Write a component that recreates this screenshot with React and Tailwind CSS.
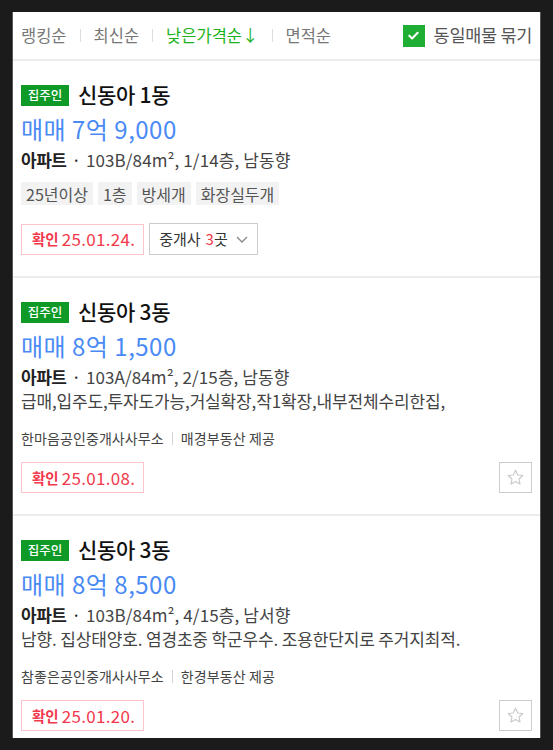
import React from 'react';

const FONT = { fontFamily: '"Noto Sans CJK KR", "Noto Sans", sans-serif' };

const listings = [
  {
    title: '신동아 1동',
    price: '매매 7억 9,000',
    spec: '103B/84m², 1/14층, 남동향',
    tags: ['25년이상', '1층', '방세개', '화장실두개'],
    confirm: '25.01.24.',
    brokers: 3,
  },
  {
    title: '신동아 3동',
    price: '매매 8억 1,500',
    spec: '103A/84m², 2/15층, 남동향',
    desc: '급매,입주도,투자도가능,거실확장,작1확장,내부전체수리한집,',
    agency: '한마음공인중개사사무소',
    source: '매경부동산 제공',
    confirm: '25.01.08.',
  },
  {
    title: '신동아 3동',
    price: '매매 8억 8,500',
    spec: '103B/84m², 4/15층, 남서향',
    desc: '남향. 집상태양호. 염경초중 학군우수. 조용한단지로 주거지최적.',
    agency: '참좋은공인중개사사무소',
    source: '한경부동산 제공',
    confirm: '25.01.20.',
  },
];

function SortBar() {
  const items = [
    { label: '랭킹순' },
    { label: '최신순' },
    { label: '낮은가격순↓', active: true },
    { label: '면적순' },
  ];
  return (
    <div className="flex items-center justify-between h-[49px] px-2 border-b-2 border-[#ececec]">
      <div className="flex items-center text-[16.5px]">
        {items.map((item, i) => (
          <React.Fragment key={item.label}>
            {i > 0 && <span className="mx-[13px] w-px h-[13px] bg-[#dddddd]" />}
            <span className={item.active ? 'text-[#1cb31c]' : 'text-[#777777]'}>{item.label}</span>
          </React.Fragment>
        ))}
      </div>
      <div className="flex items-center gap-[9px]">
        <span className="flex items-center justify-center w-[22px] h-[22px] bg-[#1fae34]">
          <svg width="13" height="13" viewBox="0 0 14 14" fill="none">
            <path d="M2.5 7.2l3 3 6-6.2" stroke="white" strokeWidth="2.2" strokeLinecap="round" strokeLinejoin="round" />
          </svg>
        </span>
        <span className="text-[17.5px] text-[#555555] tracking-[-0.3px]">동일매물 묶기</span>
      </div>
    </div>
  );
}

function Confirm({ date }) {
  return (
    <div className="flex items-center h-[31px] pl-[10px] pr-[8px] border border-[#ffc4cb] text-[#f2384c]">
      <span className="text-[14.5px] font-bold mr-[3px]">확인</span>
      <span className="text-[17px] tracking-[0.3px]">{date}</span>
    </div>
  );
}

function Listing({ item, last }) {
  return (
    <div className={last ? 'px-2 pt-[21px] pb-[5px]' : 'px-2 pt-[21px] pb-[21px] border-b-2 border-[#ececec]'}>
      <div className="flex items-center h-[26px]">
        <span className="flex items-center justify-center w-[48px] h-[21px] bg-[#0f9a27] text-white text-[12.5px] font-medium">
          집주인
        </span>
        <span className="ml-[9px] text-[21px] font-medium text-[#111111] tracking-[-0.3px]">{item.title}</span>
      </div>
      <div className="mt-[6px] h-[30px] flex items-center text-[24px] text-[#4a8af4] tracking-[0.5px]">
        {item.price}
      </div>
      <div className="mt-[4px] h-[24px] flex items-center text-[17px] text-[#444444]">
        <span className="font-bold text-[#222222] tracking-[-0.5px]">아파트</span>
        <span className="mx-[5px] text-[#222222]">·</span>
        <span className="tracking-[0.1px]">{item.spec}</span>
      </div>
      {item.tags && (
        <div className="mt-[10px] flex gap-[5px]">
          {item.tags.map((t) => (
            <span key={t} className="h-[23px] px-[5px] flex items-center bg-[#f2f2f2] text-[16px] text-[#555555]">
              {t}
            </span>
          ))}
        </div>
      )}
      {item.desc && (
        <div className="h-[24px] flex items-center text-[17px] text-[#444444] tracking-[-0.15px]">{item.desc}</div>
      )}
      {item.agency && (
        <div className="mt-[15px] h-[20px] flex items-center text-[14px] text-[#444444] tracking-[0.1px]">
          <span>{item.agency}</span>
          <span className="mx-[8px] w-px h-[13px] bg-[#d5d5d5]" />
          <span>{item.source}</span>
        </div>
      )}
      <div className={item.tags ? 'mt-[18px] flex items-center gap-[5px]' : 'mt-[14px] flex items-center justify-between'}>
        <Confirm date={item.confirm} />
        {item.brokers ? (
          <div className="flex items-center h-[32px] pl-[9px] pr-[9px] border border-[#cccccc] text-[15px] text-[#333333]">
            중개사 <span className="ml-[5px] text-[#f2384c]">{item.brokers}</span>곳
            <svg className="ml-[8px]" width="12" height="7" viewBox="0 0 12 7" fill="none">
              <path d="M1 1l5 5 5-5" stroke="#888888" strokeWidth="1.3" />
            </svg>
          </div>
        ) : (
          <button className="flex items-center justify-center w-[33px] h-[31px] border border-[#cccccc] bg-white">
            <svg width="19" height="19" viewBox="0 0 24 24" fill="none">
              <path
                d="M12 2.8l2.8 6 6.5.7-4.9 4.4 1.4 6.4L12 17l-5.8 3.3 1.4-6.4-4.9-4.4 6.5-.7z"
                stroke="#c9c9c9"
                strokeWidth="1.4"
                strokeLinejoin="round"
              />
            </svg>
          </button>
        )}
      </div>
    </div>
  );
}

export default function App() {
  return (
    <div className="h-[750px] overflow-hidden bg-[#1b1b1b] pt-[12px] px-[12px]" style={FONT}>
      <div className="w-[529px] h-[726px] bg-white border-x border-[#555555] overflow-hidden">
        <SortBar />
        {listings.map((item, i) => (
          <Listing key={i} item={item} last={i === listings.length - 1} />
        ))}
      </div>
    </div>
  );
}
